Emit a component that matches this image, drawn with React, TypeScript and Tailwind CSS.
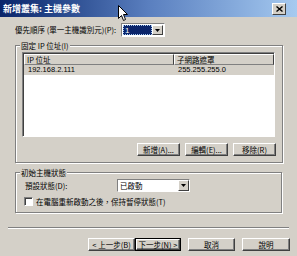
import React from 'react';

const font = { fontFamily: '"Noto Sans CJK TC", "Liberation Sans", sans-serif' };

// raised win2k style button
const Btn = ({ label, w, def }: { label: string; w: string; def?: boolean }) => (
  <div className={`${w} h-[13px] ${def ? 'border border-black' : ''} flex`}>
    <div className="flex-1 flex items-center justify-center whitespace-nowrap bg-[#d4d0c8] border-t border-l border-white border-r border-b border-r-[#404040] border-b-[#404040] shadow-[inset_-1px_-1px_0_#808080] text-[7.5px] leading-none text-black">
      {label}
    </div>
  </div>
);

const Arrow = () => (
  <div className="w-[11px] h-full bg-[#d4d0c8] border-t border-l border-white border-r border-b border-r-[#404040] border-b-[#404040] flex items-center justify-center">
    <svg width="5" height="3" viewBox="0 0 5 3">
      <path d="M0 0h5L2.5 3z" fill="#000" />
    </svg>
  </div>
);

const Group = ({ title, className, children }: { title: string; className: string; children: React.ReactNode }) => (
  <div className={`border border-[#808080] shadow-[inset_1px_1px_0_#fff,1px_1px_0_#fff] ${className}`}>
    <div className="flex">
      <span className="-mt-[6px] ml-[4px] px-[1px] bg-[#d4d0c8] text-[7.5px] leading-[11px] text-black whitespace-nowrap">{title}</span>
    </div>
    {children}
  </div>
);

const App: React.FC = () => {
  return (
    <div className="relative w-[297px] h-[256px] bg-[#d4d0c8] flex flex-col overflow-hidden text-black" style={font}>
      {/* title bar */}
      <div className="h-[17px] flex items-center justify-between bg-gradient-to-r from-[#0a246a] via-[#5a7fbf] to-[#a6caf0] pl-[3px] pr-[11px]">
        <span className="text-white font-bold text-[9px] leading-none whitespace-nowrap">新增叢集: 主機參數</span>
        <div className="w-[14px] h-[12px] bg-[#d4d0c8] border-t border-l border-white border-r border-b border-r-[#404040] border-b-[#404040] flex items-center justify-center">
          <svg width="7" height="6" viewBox="0 0 7 6">
            <path d="M0.5 0.5L6.5 5.5M6.5 0.5L0.5 5.5" stroke="#000" strokeWidth="1.4" />
          </svg>
        </div>
      </div>

      {/* priority */}
      <div className="mt-[6px] ml-[15px] flex items-center h-[14px]">
        <span className="w-[106px] text-[7.5px] leading-none whitespace-nowrap">優先順序 (單一主機識別元)(P):</span>
        <div className="w-[44px] h-[14px] border border-t-[#808080] border-l-[#808080] border-r-white border-b-white bg-white flex p-[1px]">
          <div className="flex-1 bg-[#0a246a] text-white text-[8px] leading-[10px] pl-[1px] border border-dotted border-[#a6caf0]" style={{ fontFamily: '"Liberation Sans", sans-serif' }}>1</div>
          <Arrow />
        </div>
      </div>

      {/* fixed IP group */}
      <Group title="固定 IP 位址(I)" className="mt-[8px] ml-[15px] w-[268px] h-[118px] flex flex-col">
        <div className="mt-[1px] ml-[6px] w-[253px] h-[85px] bg-white border border-t-[#808080] border-l-[#808080] border-r-white border-b-white shadow-[inset_1px_1px_0_#404040] pt-[1px] pl-[1px] text-[7.5px] leading-none">
          <div className="flex h-[11px]">
            <div className="w-[150px] bg-[#d4d0c8] border-t border-l border-white border-r border-b border-r-[#404040] border-b-[#808080] flex items-center pl-[2px] whitespace-nowrap">IP 位址</div>
            <div className="flex-1 bg-[#d4d0c8] border-t border-l border-white border-r border-b border-r-[#404040] border-b-[#808080] flex items-center pl-[2px] whitespace-nowrap">子網路遮罩</div>
          </div>
          <div className="flex h-[10px] bg-[#d4d0c8] items-center" style={{ fontFamily: '"Liberation Sans", sans-serif' }}>
            <div className="w-[150px] pl-[4px] text-[7.5px]">192.168.2.111</div>
            <div className="flex-1 pl-[4px] text-[7.5px]">255.255.255.0</div>
          </div>
        </div>
        <div className="mt-[6px] ml-[121px] flex gap-[5px]">
          <Btn label="新增(A)..." w="w-[43px]" />
          <Btn label="編輯(E)..." w="w-[43px]" />
          <Btn label="移除(R)" w="w-[43px]" />
        </div>
      </Group>

      {/* initial state group */}
      <Group title="初始主機狀態" className="mt-[9px] ml-[15px] w-[267px] h-[41px] flex flex-col">
        <div className="ml-[9px] flex items-center h-[13px] mt-[1px]">
          <span className="w-[92px] text-[7.5px] leading-none whitespace-nowrap">預設狀態(D):</span>
          <div className="w-[73px] h-[13px] border border-t-[#808080] border-l-[#808080] border-r-white border-b-white bg-white flex">
            <div className="flex-1 text-[7.5px] leading-[11px] pl-[2px]">已啟動</div>
            <Arrow />
          </div>
        </div>
        <div className="ml-[8px] mt-[5px] flex items-center">
          <div className="w-[9px] h-[9px] bg-white border border-t-[#808080] border-l-[#808080] border-r-white border-b-white shadow-[inset_1px_1px_0_#404040]" />
          <span className="ml-[3px] text-[7.5px] leading-none whitespace-nowrap">在電腦重新啟動之後，保持暫停狀態(T)</span>
        </div>
      </Group>

      {/* separator */}
      <div className="mt-[14px] ml-[8px] w-[281px] h-[2px] border-t border-[#808080] border-b border-b-white" />

      {/* bottom buttons */}
      <div className="mt-[9px] ml-[88px] flex">
        <Btn label="< 上一步(B)" w="w-[47px]" />
        <Btn label="下一步(N) >" w="w-[46px]" def />
        <div className="w-[7px]" />
        <Btn label="取消" w="w-[47px]" />
        <div className="w-[7px]" />
        <Btn label="說明" w="w-[48px]" />
      </div>

      {/* mouse pointer */}
      <svg className="absolute left-[118px] top-[5px]" width="11" height="17" viewBox="0 0 11 17">
        <path d="M0.5 0.5V13.5L3.5 10.5L5.5 15.5L7.5 14.5L5.5 9.5H9.5Z" fill="#fff" stroke="#000" strokeWidth="1" />
      </svg>
    </div>
  );
};

export default App;
